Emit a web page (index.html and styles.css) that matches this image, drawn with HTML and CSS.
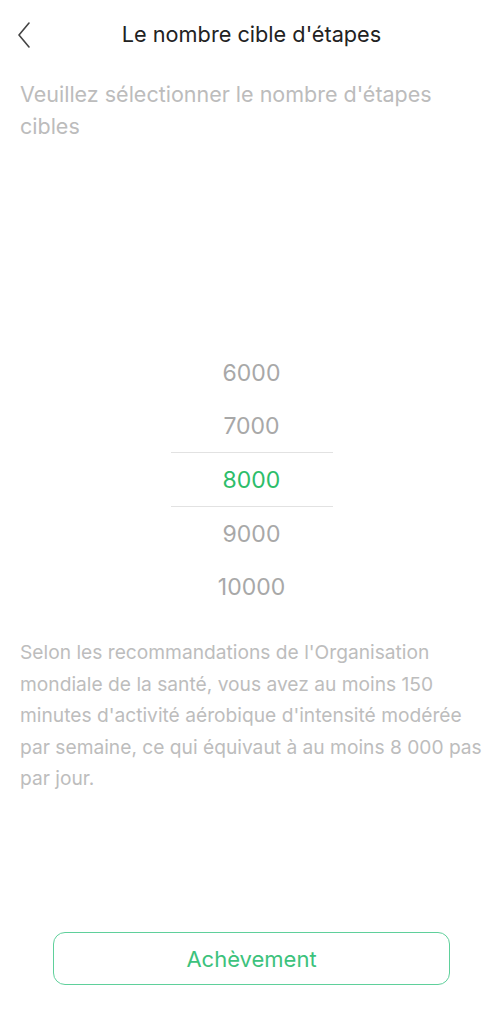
FILE: index.html
```html
<!DOCTYPE html>
<html lang="fr">
<head>
<meta charset="utf-8">
<link rel="stylesheet" href="styles.css">
</head>
<body>
<div class="page">
  <header class="bar">
    <span class="back"><svg width="14" height="26" viewBox="0 0 14 26"><path d="M12 1 L2 13 L12 25" fill="none" stroke="#444" stroke-width="1.6" stroke-linecap="round" stroke-linejoin="round"/></svg></span>
    <h1 class="title">Le nombre cible d'étapes</h1>
  </header>
  <p class="subtitle">Veuillez sélectionner le nombre d'étapes cibles</p>
  <div class="picker">
    <div class="item">6000</div>
    <div class="item">7000</div>
    <div class="item selected">8000</div>
    <div class="item">9000</div>
    <div class="item">10000</div>
  </div>
  <p class="note">Selon les recommandations de l'Organisation mondiale de la santé, vous avez au moins 150 minutes d'activité aérobique d'intensité modérée par semaine, ce qui équivaut à au moins 8 000 pas par jour.</p>
  <div class="spacer"></div>
  <button class="done">Achèvement</button>
</div>
</body>
</html>
```
FILE: styles.css
```css
html, body { margin: 0; padding: 0; background: #fff; }
body { font-family: Inter, "Liberation Sans", sans-serif; }
.page { width: 503px; height: 1024px; display: flex; flex-direction: column; box-sizing: border-box; }
.bar { position: relative; height: 68px; display: flex; align-items: center; justify-content: center; }
.back { position: absolute; left: 17px; top: 22px; }
.title { margin: 0; font-size: 21.7px; font-weight: 400; color: #222; }
.subtitle { margin: 10px 20px 0; font-size: 21.5px; line-height: 32px; color: #bcbcbc; }
.picker { margin: 204px auto 0; width: 162px; display: flex; flex-direction: column; }
.item { height: 53px; display: flex; align-items: center; justify-content: center; font-size: 23px; color: #a8a8a8; }
.item.selected { color: #2dbd6a; border-top: 1px solid #e2e2e2; border-bottom: 1px solid #e2e2e2; }
.note { margin: 24px 20px 0; font-size: 19.2px; line-height: 31.5px; color: #bdbdbd; }
.spacer { flex: 1; }
.done { margin: 0 53px 39px; height: 53px; border: 1.5px solid #5fd09b; border-radius: 12px; background: #fff; font-family: inherit; font-size: 22px; color: #3cc27c; }
```
